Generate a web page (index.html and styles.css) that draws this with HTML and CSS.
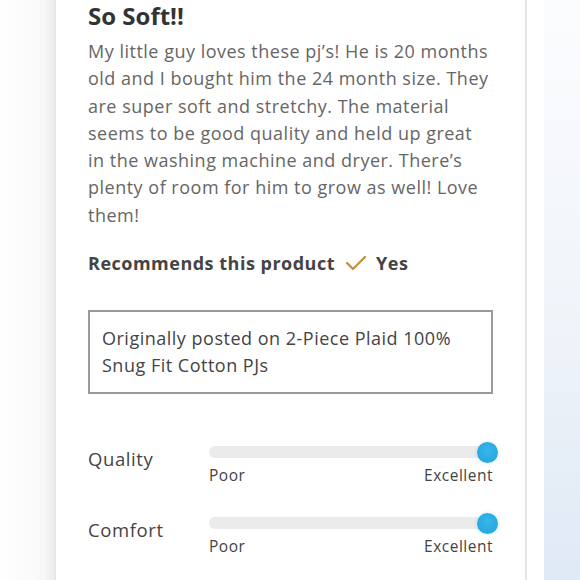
FILE: index.html
```html
<!DOCTYPE html>
<html>
<head>
<meta charset="utf-8">
<link rel="stylesheet" href="styles.css">
</head>
<body>
<div class="page">
  <div class="gutter-left"></div>
  <div class="card">
    <h2 class="title">So Soft!!</h2>
    <p class="body">My little guy loves these pj’s! He is 20 months old and I bought him the 24 month size. They are super soft and stretchy. The material seems to be good quality and held up great in the washing machine and dryer. There’s plenty of room for him to grow as well! Love them!</p>
    <div class="recommend">
      <span class="rec-label">Recommends this product</span>
      <svg class="check" width="22" height="16" viewBox="0 0 22 16"><path d="M2 8 L8 14 L20 2" fill="none" stroke="#c8913a" stroke-width="2.4" stroke-linecap="round" stroke-linejoin="round"/></svg>
      <span class="rec-yes">Yes</span>
    </div>
    <div class="posted">Originally posted on 2-Piece Plaid 100% Snug Fit Cotton PJs</div>
    <div class="ratings">
      <div class="rating">
        <div class="r-label">Quality</div>
        <div class="r-scale">
          <div class="track"><div class="knob"></div></div>
          <div class="ends"><span>Poor</span><span>Excellent</span></div>
        </div>
      </div>
      <div class="rating">
        <div class="r-label">Comfort</div>
        <div class="r-scale">
          <div class="track"><div class="knob"></div></div>
          <div class="ends"><span>Poor</span><span>Excellent</span></div>
        </div>
      </div>
    </div>
  </div>
  <div class="gutter-right"><div class="blue"></div></div>
</div>
</body>
</html>
```
FILE: styles.css
```css
html, body {
  margin: 0;
  padding: 0;
  width: 580px;
  height: 580px;
  overflow: hidden;
  background: #ffffff;
}
.page {
  display: flex;
  height: 580px;
  font-family: "Open Sans", "DejaVu Sans", sans-serif;
}
.gutter-left {
  width: 54px;
  flex: none;
  background: linear-gradient(to right, #ffffff 0%, #f8f8f8 80%, #ececec 100%);
}
.card {
  width: 473px;
  flex: none;
  box-sizing: border-box;
  padding: 0 32px 0 32px;
  background: #fff;
  border-left: 2px solid #e6e6e6;
  border-right: 2px solid #e6e6e6;
}
.gutter-right {
  flex: 1;
  display: flex;
  background: #fff;
}
.blue {
  margin-left: 17px;
  flex: 1;
  background: linear-gradient(to bottom, #fbfcfe 0%, #f1f5fa 50%, #dfe9f5 100%);
}
.title {
  margin: 1px 0 0 0;
  font-size: 24px;
  font-weight: 700;
  color: #333;
  line-height: 29px;
}
.body {
  margin: 8px 0 0 0;
  font-size: 18px;
  line-height: 27.3px;
  color: #666;
  width: 402px;
  letter-spacing: 0.5px;
}
.recommend {
  display: flex;
  align-items: center;
  margin-top: 22px;
  font-size: 18px;
  font-weight: 700;
  color: #444;
  letter-spacing: 0.5px;
}
.check { margin: 0 9px 0 10px; }
.rec-yes { font-weight: 700; }
.posted {
  margin-top: 35px;
  width: 405px;
  box-sizing: border-box;
  border: 2px solid #9a9a9a;
  padding: 13px 12px 13px 12px;
  font-size: 18px;
  line-height: 27px;
  color: #444;
  letter-spacing: 0.5px;
}
.ratings {
  margin-top: 52px;
}
.rating {
  display: flex;
  height: 71px;
}
.r-label {
  width: 121px;
  font-size: 18.5px;
  color: #444;
  letter-spacing: 0.6px;
}
.r-scale {
  width: 284px;
}
.track {
  position: relative;
  height: 12px;
  border-radius: 6px;
  background: #ebebeb;
  margin-right: -5px;
}
.knob {
  position: absolute;
  right: 0;
  top: -4px;
  width: 21px;
  height: 21px;
  border-radius: 50%;
  background: radial-gradient(circle at 50% 40%, #37b6ea 0%, #22a2dc 100%);
  box-shadow: 0 0 4px rgba(40, 170, 225, 0.25);
}
.ends {
  display: flex;
  justify-content: space-between;
  margin-top: 6px;
  font-size: 15.5px;
  color: #444;
  letter-spacing: 0.5px;
}
```
